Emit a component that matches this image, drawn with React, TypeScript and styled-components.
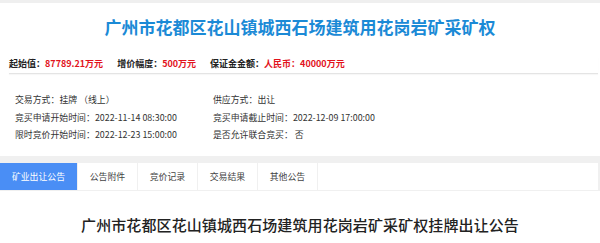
import React from 'react'
import styled, {createGlobalStyle} from 'styled-components'

const GlobalStyle = createGlobalStyle`
	html, body {
		margin: 0;
		padding: 0;
		background: #fff;
		font-family: 'Noto Sans CJK SC', 'Noto Sans', sans-serif;
	}
`

const prices = [
	{label: '起始值：', value: '87789.21万元'},
	{label: '增价幅度：', value: '500万元'},
	{label: '保证金金额：', value: '人民币：40000万元'},
]

const info = [
	['交易方式：', '挂牌 （线上）'],
	['供应方式：', '出让'],
	['竞买申请开始时间：', '2022-11-14 08:30:00'],
	['竞买申请截止时间：', '2022-12-09 17:00:00'],
	['限时竞价开始时间：', '2022-12-23 15:00:00'],
	['是否允许联合竞买：', ' 否'],
]

const tabs = ['矿业出让公告', '公告附件', '竞价记录', '交易结果', '其他公告']

export default function App() {
	return (
		<>
			<GlobalStyle />
			<Page>
				<TopStrip />
				<Header>
					<Title>广州市花都区花山镇城西石场建筑用花岗岩矿采矿权</Title>
					<PriceRow>
						{prices.map((p) => (
							<PriceItem key={p.label}>
								{p.label}
								<Red>{p.value}</Red>
							</PriceItem>
						))}
					</PriceRow>
				</Header>
				<InfoGrid>
					{info.map(([label, value]) => (
						<InfoItem key={label}>
							{label}
							{value}
						</InfoItem>
					))}
				</InfoGrid>
				<TabBar>
					{tabs.map((t, idx) => (
						<Tab key={t} $active={idx === 0} $wide={idx === 0}>
							{t}
						</Tab>
					))}
					<TabFiller />
				</TabBar>
				<ArticleTitle>广州市花都区花山镇城西石场建筑用花岗岩矿采矿权挂牌出让公告</ArticleTitle>
			</Page>
		</>
	)
}

const Page = styled.div`
	width: 600px;
	height: 243px;
	overflow: hidden;
	background: #fff;
`

const TopStrip = styled.div`
	height: 3px;
	background: #efefef;
`

const Header = styled.div`
	padding-top: 12px;
`

const Title = styled.h1`
	margin: 0;
	text-align: center;
	font-size: 17px;
	line-height: 24px;
	font-weight: 700;
	color: #1b8ad6;
`

const PriceRow = styled.div`
	display: flex;
	gap: 14px;
	margin: 18px 2px 0 9px;
	padding-bottom: 2px;
	border-bottom: 1px solid #e4e4e4;
	box-shadow: 0 1px 1px rgba(0, 0, 0, 0.03);
`

const PriceItem = styled.div`
	font-size: 9px;
	line-height: 14px;
	font-weight: 700;
	color: #222;
	white-space: nowrap;
`

const Red = styled.span`
	color: #e2121c;
`

const InfoGrid = styled.div`
	display: grid;
	grid-template-columns: 198px 1fr;
	padding: 17px 0 12px 15px;
`

const InfoItem = styled.div`
	font-size: 8.9px;
	line-height: 17.5px;
	color: #333;
	white-space: pre;
`

const TabBar = styled.div`
	display: flex;
	gap: 1px;
	padding: 7px 2px 1px 0;
	background: #f0f0f0;
`

const Tab = styled.div<{$active?: boolean; $wide?: boolean}>`
	width: ${(p) => (p.$wide ? '77px' : '59px')};
	height: 27px;
	display: flex;
	align-items: center;
	justify-content: center;
	font-size: 8.9px;
	color: ${(p) => (p.$active ? '#fff' : '#444')};
	background: ${(p) => (p.$active ? '#4a8ef5' : '#fff')};
`

const TabFiller = styled.div`
	flex: 1;
	background: #fff;
`

const ArticleTitle = styled.h2`
	margin: 24px 0 0;
	text-align: center;
	font-size: 15px;
	line-height: 20px;
	font-weight: 500;
	color: #222;
	letter-spacing: 0.1px;
`
